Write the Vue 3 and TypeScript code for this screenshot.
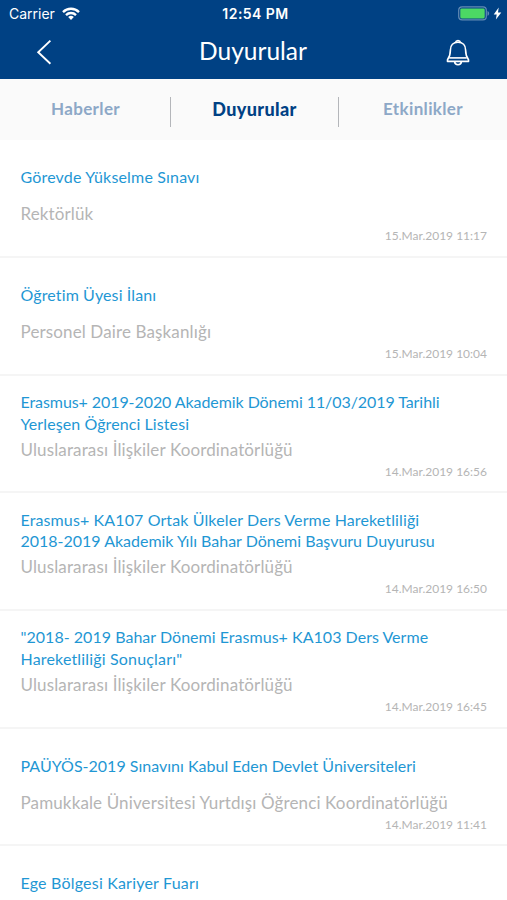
<script setup lang="ts">
interface TitleLine {
  text: string
  tracking: number
}

interface Announcement {
  title: TitleLine[]
  unit: string
  date: string
}

const tabs: string[] = ['Haberler', 'Duyurular', 'Etkinlikler']
const activeTab = 'Duyurular'

const announcements: Announcement[] = [
  { title: [{ text: 'Görevde Yükselme Sınavı', tracking: 0.17 }], unit: 'Rektörlük', date: '15.Mar.2019 11:17' },
  { title: [{ text: 'Öğretim Üyesi İlanı', tracking: 0.12 }], unit: 'Personel Daire Başkanlığı', date: '15.Mar.2019 10:04' },
  {
    title: [
      { text: 'Erasmus+ 2019-2020 Akademik Dönemi 11/03/2019 Tarihli', tracking: -0.075 },
      { text: 'Yerleşen Öğrenci Listesi', tracking: 0.09 },
    ],
    unit: 'Uluslararası İlişkiler Koordinatörlüğü',
    date: '14.Mar.2019 16:56',
  },
  {
    title: [
      { text: 'Erasmus+ KA107 Ortak Ülkeler Ders Verme Hareketliliği', tracking: 0.12 },
      { text: '2018-2019 Akademik Yılı Bahar Dönemi Başvuru Duyurusu', tracking: -0.01 },
    ],
    unit: 'Uluslararası İlişkiler Koordinatörlüğü',
    date: '14.Mar.2019 16:50',
  },
  {
    title: [
      { text: '"2018- 2019 Bahar Dönemi Erasmus+ KA103 Ders Verme', tracking: 0.03 },
      { text: 'Hareketliliği Sonuçları"', tracking: 0.17 },
    ],
    unit: 'Uluslararası İlişkiler Koordinatörlüğü',
    date: '14.Mar.2019 16:45',
  },
  {
    title: [{ text: 'PAÜYÖS-2019 Sınavını Kabul Eden Devlet Üniversiteleri', tracking: 0.01 }],
    unit: 'Pamukkale Üniversitesi Yurtdışı Öğrenci Koordinatörlüğü',
    date: '14.Mar.2019 11:41',
  },
  { title: [{ text: 'Ege Bölgesi Kariyer Fuarı', tracking: 0.2 }], unit: '', date: '' },
]
</script>

<template>
  <div class="screen">
    <header class="header">
      <div class="status">
        <div class="carrier">
          <span>Carrier</span>
          <svg width="18" height="14" viewBox="0 0 18 14" fill="none" stroke="#fff" stroke-width="2.3">
            <path d="M1 5.1a11.2 11.2 0 0 1 16 0" />
            <path d="M4 8.1a7 7 0 0 1 10 0" />
            <path d="M9 13l-2.8-3a4 4 0 0 1 5.6 0z" fill="#fff" stroke="none" />
          </svg>
        </div>
        <span class="clock">12:54 PM</span>
        <div class="power">
          <svg width="32" height="15" viewBox="0 0 32 15">
            <rect x="0.7" y="0.9" width="27.6" height="13" rx="3.4" fill="none" stroke="#638bb4" stroke-width="1.2" />
            <rect x="2.3" y="2.4" width="24.4" height="10" rx="1.4" fill="#4cd964" />
            <path d="M29.5 5c2.2.8 2.2 4 0 4.8z" fill="#638bb4" />
          </svg>
          <svg width="9" height="13" viewBox="0 0 9 13">
            <path d="M5.7 0.5L.7 7.5h3L2.9 12.5l5.4-7.1H5z" fill="#fff" />
          </svg>
        </div>
      </div>
      <nav class="nav">
        <svg width="16" height="26" viewBox="0 0 16 26" fill="none" stroke="#fff" stroke-width="1.9">
          <path d="M14.4 1.6L2.2 13.2l12.2 11.6" />
        </svg>
        <h1>Duyurular</h1>
        <svg class="bell" width="24" height="28" viewBox="0 0 24 28" fill="none" stroke="#fff" stroke-width="1.6" stroke-linejoin="round">
          <path d="M9.4 4.6a2.7 2.7 0 0 1 5.2 0" />
          <path d="M12 4.2c-4.7 0-7.6 3.2-7.6 7.7 0 4.5-.3 6.3-2.9 9.8v1.7h21v-1.7c-2.6-3.5-2.9-5.3-2.9-9.8 0-4.5-2.9-7.7-7.6-7.7z" />
          <path d="M3.3 19.9h17.4" />
          <path d="M8.6 23.6c.3 4.1 6.5 4.1 6.8 0" />
        </svg>
      </nav>
    </header>
    <div class="tabs">
      <div v-for="tab in tabs" :key="tab" class="tab" :class="{ active: tab === activeTab }">
        <span>{{ tab }}</span>
      </div>
    </div>
    <main class="list">
      <article v-for="item in announcements" :key="item.title[0].text" class="item">
        <h2 class="title">
          <span v-for="line in item.title" :key="line.text" :style="{ letterSpacing: `${line.tracking}px` }">{{ line.text }}</span>
        </h2>
        <p class="unit">{{ item.unit }}</p>
        <time class="date">{{ item.date }}</time>
      </article>
    </main>
  </div>
</template>

<style>
body {
  margin: 0;
  background: #fff;
}
</style>

<style scoped>
.screen {
  width: 507px;
  height: 900px;
  overflow: hidden;
  background: #fff;
  font-family: Lato, "Noto Sans", sans-serif;
  font-variant-ligatures: none;
}
.header {
  height: 79px;
  background: #004184;
  color: #fff;
}
.status {
  display: grid;
  grid-template-columns: 1fr auto 1fr;
  align-items: center;
  height: 27px;
  padding: 0 5px 0 9px;
  font-family: Inter, "Liberation Sans", sans-serif;
  font-size: 14px;
}
.carrier {
  display: flex;
  align-items: center;
  gap: 7px;
}
.clock {
  font-weight: 600;
  letter-spacing: 0.45px;
}
.power {
  display: flex;
  align-items: center;
  justify-content: flex-end;
  gap: 3px;
  margin-top: -1px;
}
.nav {
  display: grid;
  grid-template-columns: 1fr auto 1fr;
  align-items: center;
  height: 50px;
  padding: 0 37px 0 36px;
}
h1 {
  margin: -3px 0 0;
  font-size: 24.5px;
  line-height: 30px;
  font-weight: 400;
}
.bell {
  justify-self: end;
}
.tabs {
  display: grid;
  grid-template-columns: 170px 168px 169px;
  align-items: center;
  height: 61.2px;
  background: #fafafa;
}
.tab {
  display: flex;
  align-items: center;
  justify-content: center;
  box-sizing: border-box;
  height: 30px;
  padding-bottom: 2px;
  margin-top: 4px;
  border-left: 1px solid #b4b6ba;
  color: #8da8c7;
  font-size: 17px;
  line-height: 22px;
  font-weight: 700;
  letter-spacing: 0.35px;
}
.tab:first-child {
  border-left-color: transparent;
}
.tab span {
  margin-top: -3px;
}
.tab.active {
  color: #004184;
  font-size: 18px;
  font-weight: 900;
}
.item {
  box-sizing: border-box;
  height: 117.7px;
  padding: 15px 20px 0 20.5px;
  border-bottom: 2px solid #f5f5f5;
}
.title {
  display: flex;
  flex-direction: column;
  justify-content: center;
  height: 44px;
  margin: 0;
  color: #1f97d4;
  font-size: 16px;
  line-height: 21.7px;
  font-weight: 400;
  white-space: nowrap;
}
.unit {
  height: 24px;
  margin: 3px 0 0;
  color: #b5b5b5;
  font-size: 17px;
  line-height: 24px;
  letter-spacing: 0.13px;
  white-space: nowrap;
}
.date {
  display: block;
  margin-top: 2px;
  color: #b5b5b5;
  font-size: 12px;
  line-height: 16px;
  text-align: right;
}
</style>
